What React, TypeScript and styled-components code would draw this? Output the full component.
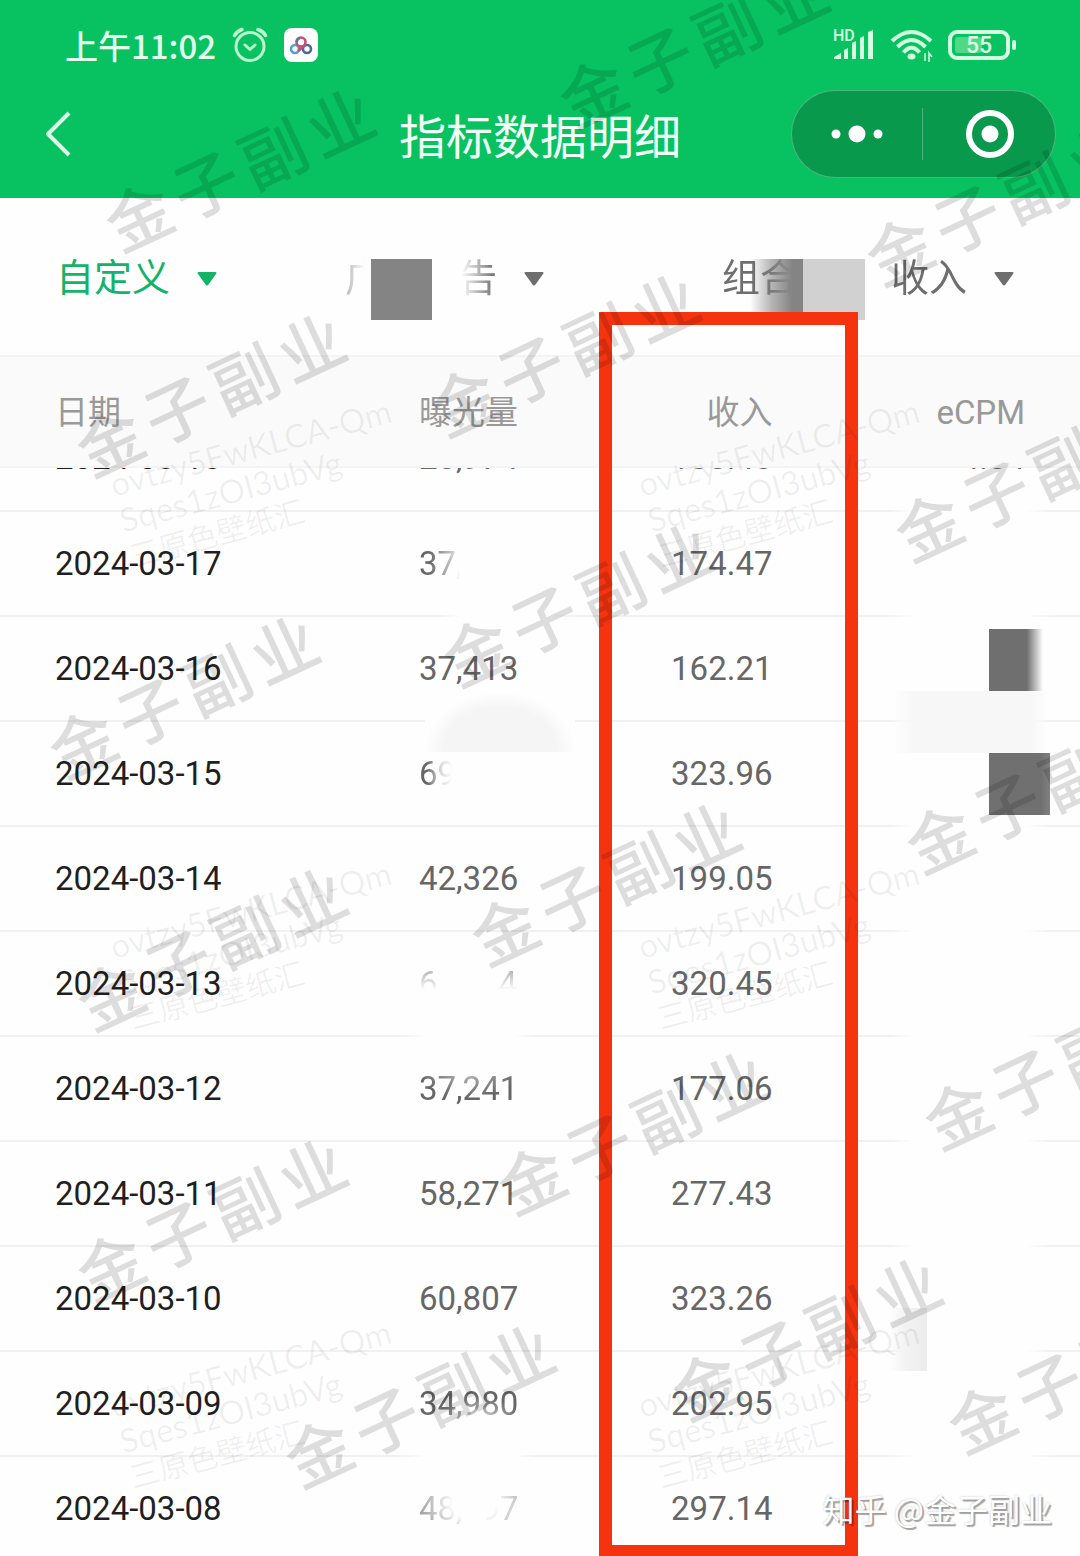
import React from 'react';
import styled, { createGlobalStyle, css } from 'styled-components';

const cjk = `'Noto Sans CJK SC', 'Noto Sans', sans-serif`;
const latin = `Roboto, 'Noto Sans CJK SC', sans-serif`;
const statusTint = '#d2ffe0';

const GlobalStyle = createGlobalStyle`
  * { box-sizing: border-box; }
  body { margin: 0; background: #fff; font-family: ${latin}; }
  button, select { font: inherit; color: inherit; border: 0; padding: 0; background: none; }
`;

const Page = styled.div`
  position: relative;
  overflow: hidden;
  background: #fefefe;
`;

/* ---------- header ---------- */

const Header = styled.header`
  background: #08c261;
  color: #f2fff6;
  height: 198px;
`;

const StatusBar = styled.div`
  display: flex;
  align-items: center;
  justify-content: space-between;
  height: 90px;
  padding: 0 63px 0 65px;
`;

const StatusGroup = styled.div<{ $gap: number }>`
  display: flex;
  align-items: center;
  gap: ${(p) => p.$gap}px;
`;

const Clock = styled.span`
  font: 500 33px/40px ${cjk};
  color: #e2ffea;
`;

const NavBar = styled.div`
  display: grid;
  grid-template-columns: 1fr auto 1fr;
  align-items: center;
  height: 86px;
  padding: 0 24px 0 40px;
`;

const BackButton = styled.button`
  display: flex;
  justify-self: start;
`;

const Title = styled.h1`
  margin: 0;
  padding-right: 16px;
  font: 400 47px/64px ${cjk};
`;

const Capsule = styled.div`
  display: flex;
  align-items: center;
  justify-self: end;
  width: 265px;
  height: 88px;
  border: 1px solid rgba(255, 255, 255, 0.28);
  border-radius: 44px;
  background: rgba(10, 60, 30, 0.3);
`;

const CapsuleButton = styled.button`
  flex: 1;
  display: flex;
  align-items: center;
  justify-content: center;
  height: 52px;

  & + & {
    border-left: 1px solid rgba(255, 255, 255, 0.28);
    padding-left: 2px;
  }
`;

/* ---------- filters ---------- */

const Filters = styled.div`
  display: grid;
  grid-template-columns: 289fr 377fr 302fr;
  align-items: center;
  height: 157px;
  padding: 0 56px 4px;
`;

const FilterLabel = styled.label<{ $active?: boolean }>`
  display: flex;
  align-items: center;
  gap: 26px;
  color: ${(p) => (p.$active ? '#14b368' : '#6e6e6e')};
`;

const FilterSelect = styled.select<{ $mask?: string }>`
  appearance: none;
  font: 400 38px/52px ${cjk};
  ${(p) => p.$mask && css`mask-image: ${p.$mask};`}
`;

/* ---------- table ---------- */

const Table = styled.table`
  width: 100%;
  table-layout: fixed;
  border-collapse: separate;
  border-spacing: 0;
`;

const Col = styled.col<{ $w: string }>`
  width: ${(p) => p.$w};
`;

const cellLayout = css`
  padding: 0;
  text-align: left;
  font-weight: 400;

  &:first-child { padding-left: 55px; }
  &:nth-child(3) { text-align: right; padding-right: 85px; }
  &:nth-child(4) { text-align: right; padding-right: 55px; }
`;

const HeadCell = styled.th`
  ${cellLayout}
  height: 113px;
  padding-top: 2px;
  font-size: 33px;
  line-height: 40px;
  color: #999;
  background: #fafafa;
  border-top: 2px solid #f4f4f4;
  border-bottom: 2px solid #f4f4f4;
`;

const Row = styled.tr`
  &:last-child td {
    height: 99px;
    padding-top: 4px;
    border-bottom: 0;
  }
`;

const Cell = styled.td`
  ${cellLayout}
  height: 105px;
  font-size: 33px;
  line-height: 40px;
  color: #666;
  border-bottom: 2px solid #f1f1f1;

  &:first-child { color: #1f1f1f; }
`;

const ClippedCell = styled(Cell)`
  height: 44px;
`;

const Clip = styled.div`
  display: flex;
  flex-direction: column;
  justify-content: flex-end;
  height: 42px;
  overflow: hidden;
`;

const ClipInner = styled.span`
  flex: none;
  line-height: 104px;
`;

const Faded = styled.span<{ $mask: string }>`
  display: inline-flex;
  justify-content: space-between;
  min-width: 98px;
  mask-image: ${(p) => p.$mask};
`;

/* ---------- overlays ---------- */

const Layer = styled.div`
  position: absolute;
  inset: 0;
  overflow: hidden;
  pointer-events: none;
`;

const Patch = styled.div<{ $x: number; $y: number; $w: number; $h: number; $fill: string }>`
  position: absolute;
  left: ${(p) => p.$x}px;
  top: ${(p) => p.$y}px;
  width: ${(p) => p.$w}px;
  height: ${(p) => p.$h}px;
  background: ${(p) => p.$fill};
`;

const Frame = styled.div`
  position: absolute;
  top: 312px;
  bottom: -2px;
  left: 55.5%;
  width: 23.9%;
  border: 13px solid #f5330f;
`;

const Watermark = styled.span<{ $x: number; $y: number }>`
  position: absolute;
  left: ${(p) => p.$x}px;
  top: ${(p) => p.$y}px;
  transform: translate(-50%, -50%) rotate(-25deg);
  font: 500 66px/72px ${cjk};
  white-space: nowrap;
  color: rgba(0, 0, 0, 0.13);
`;

const Glyph = styled.span`
  margin: 0 4px;
`;

const UserMark = styled.div<{ $x: number; $y: number }>`
  position: absolute;
  left: ${(p) => p.$x}px;
  top: ${(p) => p.$y}px;
  transform: rotate(-15deg);
  transform-origin: 0 0;
  font: 400 33px/37px Lato, ${cjk};
  white-space: nowrap;
  color: rgba(0, 0, 0, 0.06);
`;

const UserMarkName = styled.div`
  font-size: 30px;
`;

const Signature = styled.span`
  position: absolute;
  right: 28px;
  bottom: 24px;
  font: 400 32px/48px ${cjk};
  color: #fff;
  text-shadow: 2px 2px 1px rgba(0, 0, 0, 0.35), 0 0 2px rgba(0, 0, 0, 0.25);
`;

/* ---------- icons ---------- */

const AlarmIcon = () => (
  <svg width="36" height="36" viewBox="0 0 36 36" fill="none" stroke="#b9f7cd" strokeWidth="3" strokeLinecap="round">
    <circle cx="18" cy="19.500" r="14" />
    <path d="M2.500 8.500 Q5 4 10 2.500M33.500 8.500Q31 4 26 2.500" strokeWidth="3.500" />
    <path d="M13 18l5 4.500 5-4.500" strokeLinejoin="round" />
  </svg>
);

const CloudIcon = () => (
  <svg width="34" height="34" viewBox="0 0 34 34" fill="none" strokeWidth="2.600">
    <rect width="34" height="34" rx="8" fill="#fff" />
    <circle cx="11" cy="21" r="4" stroke="#4da3d0" />
    <circle cx="23" cy="21" r="4" stroke="#47699c" />
    <circle cx="17" cy="14" r="4.500" stroke="#c4506f" />
    <path d="M14 23l6-5" stroke="#c4506f" />
    <path d="M12.800 14a4.300 4.300 0 0 1 3-4" stroke="#5a77b0" />
  </svg>
);

const SignalIcon = () => (
  <svg width="43" height="34" viewBox="0 0 43 34" fill={statusTint}>
    <text x="0" y="13" fontFamily="Roboto, sans-serif" fontSize="16" fontWeight="500">HD</text>
    <path d="M1 31v-2l7-4v6zM11 31v-9l4-2v11zM19 31V15l4-2v18zM27 31V10l4-2v23zM35 31V4l5-2v29z" />
  </svg>
);

const WifiIcon = () => (
  <svg width="44" height="34" viewBox="0 0 44 34" fill="none" stroke={statusTint} strokeWidth="4">
    <path d="M2 13Q21.500-5 41 13M7.500 19Q21.500 5 35.500 19M13.500 24.500Q21.500 15 29.500 24.500" />
    <ellipse cx="21.500" cy="28.500" rx="4" ry="3" fill={statusTint} stroke="none" />
    <path d="M35 25v8M39 34v-9l3 4" strokeWidth="1.500" />
  </svg>
);

const BatteryIcon = () => (
  <svg width="69" height="30" viewBox="0 0 69 30">
    <rect x="2" y="2" width="58" height="26" rx="7" fill="none" stroke={statusTint} strokeWidth="4" />
    <rect x="7" y="7" width="27" height="16" rx="3" fill="#4fd886" />
    <rect x="64" y="10" width="4" height="10" rx="2" fill={statusTint} />
    <text x="31" y="23" textAnchor="middle" fontFamily="Roboto, sans-serif" fontSize="23" fontWeight="500" fill="#dcffe6">55</text>
  </svg>
);

const Caret = () => (
  <svg width="20" height="22" viewBox="0 -8 20 22" fill="currentColor">
    <path d="M2 0h16q2.500 0 1 2l-7.500 10.500q-1.500 2-3 0L1 2Q-.5 0 2 0z" />
  </svg>
);

/* ---------- data ---------- */

const clipped = ['2024-03-18', '28,974', '188.48', '4.84'];

const fadeRight = 'linear-gradient(90deg, #000 10%, rgba(0,0,0,.4) 32%, transparent 42%)';
const fadeSix = 'linear-gradient(90deg, #000 8%, rgba(0,0,0,.25) 22%, transparent 34%)';
const fadeDown = 'linear-gradient(180deg, rgba(0,0,0,.45) 20%, transparent 65%)';
const fadeTop = 'radial-gradient(ellipse 50% 60% at 50% 10%, rgba(0,0,0,.45), #000)';
const fadeBottom = 'radial-gradient(ellipse 45% 60% at 58% 90%, rgba(0,0,0,.15), #000)';
const fadeCentre = 'radial-gradient(ellipse 55% 100% at 56% 35%, transparent 40%, rgba(0,0,0,.6))';

type Entry = { date: string; views: string[]; income: string; mask?: string };

const rows: Entry[] = [
  { date: '2024-03-17', views: ['37,'], income: '174.47', mask: fadeRight },
  { date: '2024-03-16', views: ['37,413'], income: '162.21' },
  { date: '2024-03-15', views: ['69'], income: '323.96', mask: fadeSix },
  { date: '2024-03-14', views: ['42,326'], income: '199.05' },
  { date: '2024-03-13', views: ['6', '4'], income: '320.45', mask: fadeDown },
  { date: '2024-03-12', views: ['37,241'], income: '177.06', mask: fadeTop },
  { date: '2024-03-11', views: ['58,271'], income: '277.43' },
  { date: '2024-03-10', views: ['60,807'], income: '323.26' },
  { date: '2024-03-09', views: ['34,980'], income: '202.95', mask: fadeBottom },
  { date: '2024-03-08', views: ['48,897'], income: '297.14', mask: fadeCentre },
];

const white = '#fefefe';
const whiteBand = `linear-gradient(90deg, transparent, ${white} 15%, ${white} 85%, transparent)`;

const patches: [number, number, number, number, string][] = [
  [371, 259, 61, 61, '#848484'],
  [803, 259, 62, 61, '#d1d1d1'],
  [750, 259, 53, 61, 'linear-gradient(90deg, transparent, rgba(110,110,110,.5) 40%, #848484 80%)'],
  [890, 500, 160, 1000, whiteBand],
  [440, 606, 130, 20, whiteBand],
  [405, 1026, 130, 20, whiteBand],
  [405, 1446, 130, 20, whiteBand],
  [425, 692, 150, 60, `radial-gradient(ellipse 50% 100% at 50% 100%, #f5f5f5 75%, ${white})`],
  [989, 629, 54, 62, 'linear-gradient(90deg, #6f6f6f 70%, transparent)'],
  [893, 691, 154, 62, 'linear-gradient(90deg, transparent, #f7f7f7 14%, #f7f7f7 90%, transparent)'],
  [989, 753, 61, 62, 'linear-gradient(90deg, #707070 85%, #808080)'],
  [889, 1308, 38, 63, 'linear-gradient(90deg, transparent, #f2f2f2 45%, #ececec)'],
];

const marks: [number, number][] = [
  [238, 166], [692, 42], [999, 200], [209, 391], [563, 351], [182, 693],
  [576, 601], [1028, 476], [1039, 788], [210, 945], [604, 880], [210, 1216],
  [631, 1129], [1057, 1064], [805, 1335], [418, 1402], [1081, 1368],
];

const userMarks: [number, number][] = [
  [106, 467], [634, 467], [106, 929], [634, 929], [106, 1388], [634, 1388],
];

export default function App() {
  return (
    <Page>
      <GlobalStyle />
      <Header>
        <StatusBar>
          <StatusGroup $gap={16}>
            <Clock>上午11:02</Clock>
            <AlarmIcon />
            <CloudIcon />
          </StatusGroup>
          <StatusGroup $gap={14}>
            <SignalIcon />
            <WifiIcon />
            <BatteryIcon />
          </StatusGroup>
        </StatusBar>
        <NavBar>
          <BackButton aria-label="返回">
            <svg width="34" height="48" viewBox="0 0 34 48" fill="none" stroke="#dcffe8" strokeWidth="4" strokeLinejoin="round">
              <path d="M29 3L8 24l21 21" />
            </svg>
          </BackButton>
          <Title>指标数据明细</Title>
          <Capsule>
            <CapsuleButton aria-label="更多">
              <svg width="52" height="20" viewBox="0 0 52 20" fill="#fff">
                <circle cx="5" cy="10" r="4.500" />
                <circle cx="26" cy="10" r="8.500" />
                <circle cx="47" cy="10" r="4.500" />
              </svg>
            </CapsuleButton>
            <CapsuleButton aria-label="关闭">
              <svg width="50" height="50" viewBox="0 0 50 50">
                <circle cx="25" cy="25" r="21" fill="none" stroke="#fff" strokeWidth="6" />
                <circle cx="25" cy="25" r="8.500" fill="#fff" />
              </svg>
            </CapsuleButton>
          </Capsule>
        </NavBar>
      </Header>

      <Filters>
        <FilterLabel $active>
          <FilterSelect aria-label="日期范围"><option>自定义</option></FilterSelect>
          <Caret />
        </FilterLabel>
        <FilterLabel>
          <FilterSelect
            aria-label="广告类型"
            $mask="linear-gradient(90deg, rgba(0,0,0,.5), transparent 13%, transparent 76%, #000 98%)"
          >
            <option>{'广\u3000\u3000告'}</option>
          </FilterSelect>
          <Caret />
        </FilterLabel>
        <FilterLabel>
          <FilterSelect
            aria-label="指标"
            $mask="linear-gradient(90deg, #000 14%, rgba(0,0,0,.8) 22%, transparent 34%, transparent 60%, #000 64%)"
          >
            <option>{'组合\u3000\u3000\u00a0\u00a0收入'}</option>
          </FilterSelect>
          <Caret />
        </FilterLabel>
      </Filters>

      <Table>
        <colgroup>
          <Col $w="38.8%" />
          <Col $w="16.7%" />
          <Col $w="23.9%" />
          <Col $w="20.6%" />
        </colgroup>
        <thead>
          <tr>
            <HeadCell scope="col">日期</HeadCell>
            <HeadCell scope="col">曝光量</HeadCell>
            <HeadCell scope="col">收入</HeadCell>
            <HeadCell scope="col">eCPM</HeadCell>
          </tr>
        </thead>
        <tbody>
          <tr>
            {clipped.map((value) => (
              <ClippedCell key={value}>
                <Clip><ClipInner>{value}</ClipInner></Clip>
              </ClippedCell>
            ))}
          </tr>
          {rows.map((row) => (
            <Row key={row.date}>
              <Cell>{row.date}</Cell>
              <Cell>
                {row.mask ? (
                  <Faded $mask={row.mask}>
                    {row.views.map((part) => <span key={part}>{part}</span>)}
                  </Faded>
                ) : row.views[0]}
              </Cell>
              <Cell>{row.income}</Cell>
              <Cell />
            </Row>
          ))}
        </tbody>
      </Table>

      <Layer>
        {patches.map(([x, y, w, h, fill]) => (
          <Patch key={`${x}-${y}`} $x={x} $y={y} $w={w} $h={h} $fill={fill} />
        ))}
        <Frame />
        {userMarks.map(([x, y]) => (
          <UserMark key={`${x}-${y}`} $x={x} $y={y}>
            <div>ovtzy5FwKLCA-Qm</div>
            <div>Sqes1zOI3ubVg</div>
            <UserMarkName>三原色壁纸汇</UserMarkName>
          </UserMark>
        ))}
        {marks.map(([x, y]) => (
          <Watermark key={`${x}-${y}`} $x={x} $y={y}>
            {[...'金子副业'].map((char) => <Glyph key={char}>{char}</Glyph>)}
          </Watermark>
        ))}
        <Signature>知乎 @金子副业</Signature>
      </Layer>
    </Page>
  );
}
